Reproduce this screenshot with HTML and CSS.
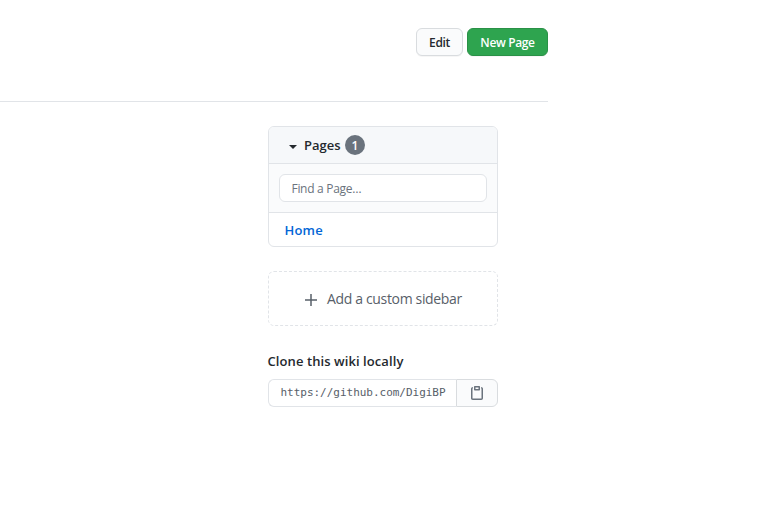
FILE: index.html
```html
<!DOCTYPE html>
<html lang="en">
<head>
<meta charset="utf-8">
<title>Wiki</title>
<link rel="stylesheet" href="styles.css">
</head>
<body>
<main class="wiki">
  <header class="actions">
    <button class="btn edit"><span>Edit</span></button>
    <button class="btn primary"><span>New Page</span></button>
  </header>
  <aside class="sidebar">
    <section class="box">
      <div class="box-header">
        <svg class="caret" width="8" height="4" viewBox="0 0 8 4"><path d="M0 0h8L4 4z" fill="currentColor"/></svg>
        <h3 class="title">Pages</h3>
        <span class="counter">1</span>
      </div>
      <div class="filter"><input class="find" type="text" placeholder="Find a Page…"></div>
      <div class="row"><a class="home">Home</a></div>
    </section>
    <a class="add">
      <svg class="plus" width="12" height="12" viewBox="0 0 12 12"><path d="M6 .2v11.6M.2 6h11.6" stroke="currentColor" stroke-width="1.5" stroke-linecap="round"/></svg>
      <span class="add-label">Add a custom sidebar</span>
    </a>
    <h5 class="clone-title">Clone this wiki locally</h5>
    <div class="clone">
      <div class="url"><span>https://github.com/DigiBP</span></div>
      <button class="copy" aria-label="Copy">
        <svg width="16" height="16" viewBox="0 0 16 16"><path fill="currentColor" fill-rule="evenodd" d="M5.75 1a.75.75 0 0 0-.75.75v3c0 .414.336.75.75.75h4.5a.75.75 0 0 0 .75-.75v-3a.75.75 0 0 0-.75-.75h-4.5zm.75 3V2.5h3V4h-3zm-2.874-.467a.75.75 0 0 0-.752-1.298A1.75 1.75 0 0 0 2 3.75v9.5c0 .966.784 1.75 1.75 1.75h8.5A1.75 1.75 0 0 0 14 13.25v-9.5a1.75 1.75 0 0 0-.874-1.515.75.75 0 1 0-.752 1.298.25.25 0 0 1 .126.217v9.5a.25.25 0 0 1-.25.25h-8.5a.25.25 0 0 1-.25-.25v-9.5a.25.25 0 0 1 .126-.217z"/></svg>
      </button>
    </div>
  </aside>
</main>
</body>
</html>
```
FILE: styles.css
```css
* { box-sizing: border-box; }
body {
  margin: 0;
  background: #fff;
  color: #24292e;
  font: 14px/20px "Open Sans", "Noto Sans", sans-serif;
}
h3, h5 { margin: 0; }
.wiki { width: 548px; }
.actions {
  display: flex;
  justify-content: flex-end;
  gap: 4px;
  height: 102px;
  padding-top: 28px;
  border-bottom: 1px solid #e1e4e8;
}
.btn {
  height: 28px;
  padding: 2px 0 0;
  border: 1px solid #d9dcdf;
  border-radius: 6px;
  background: #fafbfc;
  color: #24292e;
  font: 600 12px/24px "Open Sans", sans-serif;
  letter-spacing: -.35px;
  white-space: nowrap;
  box-shadow: 0 1px 0 rgba(27,31,35,.04);
}
.edit { width: 47px; }
.primary {
  width: 81px;
  border-color: #2a9147;
  background: #2ea44f;
  color: #fff;
}
.sidebar { width: 230px; margin: 24px 0 0 268px; }
.box {
  height: 121px;
  overflow: hidden;
  border: 1px solid #e1e4e8;
  border-radius: 6px;
}
.box-header {
  display: flex;
  align-items: center;
  height: 37px;
  padding-left: 20px;
  border-bottom: 1px solid #e1e4e8;
  background: #f6f8fa;
}
.caret { margin-top: 3px; }
.title { width: 37px; margin: 0 4px 0 7px; font-size: 13px; font-weight: 600; letter-spacing: 0; }
.counter {
  width: 20px;
  height: 20px;
  border-radius: 10px;
  background: #6a737d;
  color: #fff;
  font-size: 12px;
  font-weight: 600;
  line-height: 21px;
  text-align: center;
}
.filter {
  height: 49px;
  padding: 10px;
  border-bottom: 1px solid #e1e4e8;
  background: #fafbfc;
}
.find {
  display: block;
  width: 208px;
  height: 28px;
  padding: 1px 12px 0 11.5px;
  border: 1px solid #e1e4e8;
  border-radius: 6px;
  background: #fff;
  font: 12px/20px "Open Sans", sans-serif;
  letter-spacing: -.3px;
}
.find::placeholder { color: #6a737d; opacity: 1; }
.row { padding: 7px 15.5px; }
.home { color: #0366d6; font-size: 13px; font-weight: 600; letter-spacing: .2px; }
.add {
  display: flex;
  align-items: center;
  height: 55px;
  margin-top: 24px;
  padding-left: 36px;
  gap: 10px;
  border: 1px dashed #e1e4e8;
  border-radius: 6px;
  color: #586069;
}
.plus { margin-top: 2px; }
.add-label { font-size: 14px; letter-spacing: -.34px; white-space: nowrap; }
.clone-title { margin: 25px 0 8px -.5px; font-size: 13px; font-weight: 600; letter-spacing: .08px; white-space: nowrap; }
.clone { display: flex; height: 28px; }
.url {
  width: 188px;
  padding-left: 11.5px;
  border: 1px solid #e1e4e8;
  border-right: 0;
  border-radius: 6px 0 0 6px;
  color: #586069;
  font: 11px/26px "DejaVu Sans Mono", monospace;
}
.url span { display: block; letter-spacing: -.02px; white-space: nowrap; }
.copy {
  display: flex;
  align-items: center;
  justify-content: center;
  width: 42px;
  padding: 0;
  border: 1px solid #d9dcdf;
  border-radius: 0 6px 6px 0;
  background: #fafbfc;
  color: #6a737d;
}
```
